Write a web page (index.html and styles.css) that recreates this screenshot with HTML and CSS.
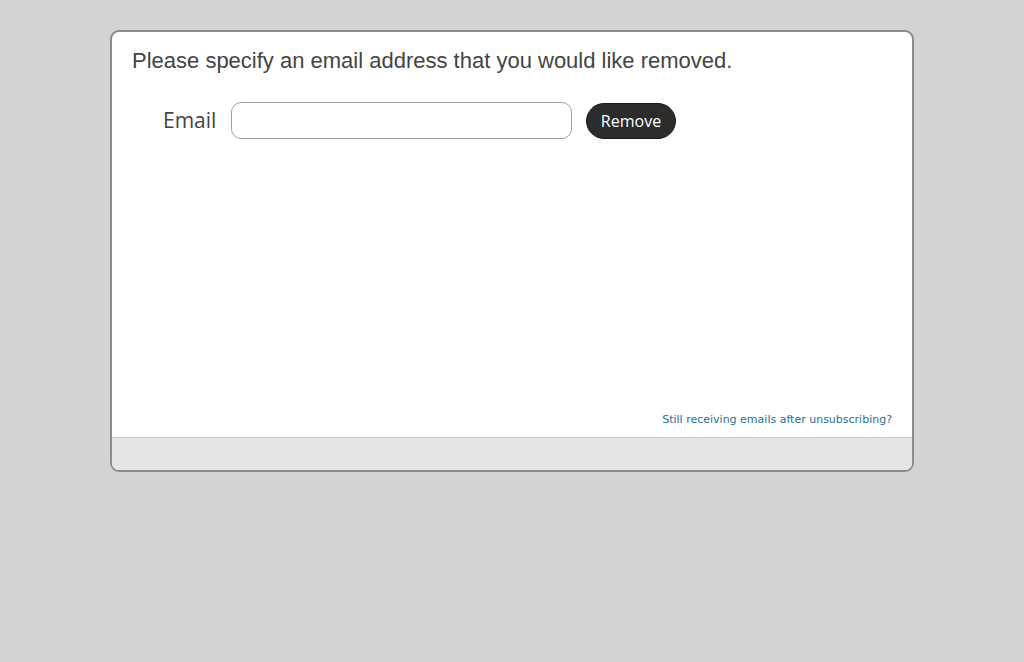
FILE: index.html
```html
<!DOCTYPE html>
<html>
<head>
<meta charset="utf-8">
<link rel="stylesheet" href="styles.css">
</head>
<body>
<div class="card">
  <div class="content">
    <h1 class="title">Please specify an email address that you would like removed.</h1>
    <form class="form-row">
      <label class="label" for="email">Email</label>
      <input class="input" id="email" type="text">
      <button class="btn" type="button">Remove</button>
    </form>
    <div class="spacer"></div>
    <div class="help"><a class="help-link" href="#">Still receiving emails after unsubscribing?</a></div>
  </div>
  <div class="footer"></div>
</div>
</body>
</html>
```
FILE: styles.css
```css
html, body {
  margin: 0;
  padding: 0;
  background: #d3d3d3;
}
body {
  padding-top: 30px;
  font-family: "Liberation Sans", Arial, sans-serif;
}
.card {
  width: 800px;
  margin-left: 110px;
  background: #fff;
  border: 2px solid #8c8c8c;
  border-radius: 9px;
  overflow: hidden;
  display: flex;
  flex-direction: column;
}
.content {
  height: 405px;
  padding: 0 20px 0 20px;
  display: flex;
  flex-direction: column;
}
.title {
  margin: 16px 0 0 0;
  font-size: 22px;
  font-weight: normal;
  color: #444;
  line-height: 25px;
}
.form-row {
  margin: 29px 0 0 0;
  display: flex;
  align-items: flex-start;
}
.label {
  font-family: "Open Sans", "Noto Sans", sans-serif;
  font-size: 21px;
  color: #444;
  margin-left: 31px;
  width: 68px;
  line-height: 28px;
  margin-top: 4px;
}
.input {
  width: 341px;
  height: 37px;
  box-sizing: border-box;
  border: 1px solid #a0a0a0;
  border-radius: 10px;
  padding: 0 8px;
  margin: 0;
  background: #fff;
}
.btn {
  margin-left: 14px;
  width: 90px;
  height: 36px;
  border: 1px solid #1a1a1a;
  border-radius: 18px;
  background: #2c2c2c;
  color: #fff;
  font-family: "Open Sans", "Noto Sans", sans-serif;
  font-size: 16px;
  padding: 0;
  margin-top: 1px;
}
.spacer {
  flex: 1;
}
.help {
  text-align: right;
  padding-bottom: 10px;
  line-height: 14px;
}
.help-link {
  font-family: "DejaVu Sans", Verdana, sans-serif;
  font-size: 11px;
  color: #2a6f96;
  text-decoration: none;
}
.footer {
  height: 32px;
  background: #e5e5e5;
  border-top: 1px solid #cccccc;
}
```
